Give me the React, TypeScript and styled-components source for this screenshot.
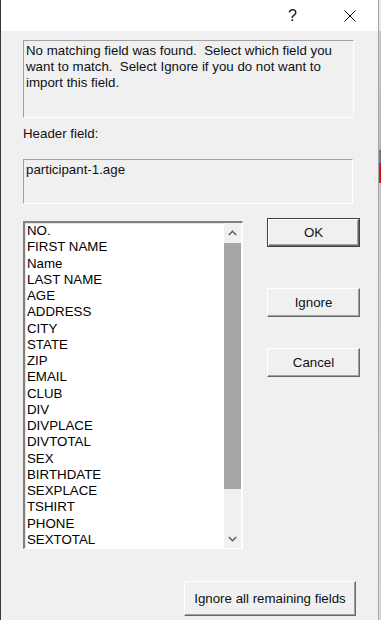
import styled, { createGlobalStyle } from "styled-components";

const GlobalStyle = createGlobalStyle`
  html, body {
    margin: 0;
    padding: 0;
    background: #f0f0f0;
  }
  body {
    font-family: "Liberation Sans", Arial, sans-serif;
    color: #000;
  }
`;

const fields = [
  "NO.",
  "FIRST NAME",
  "Name",
  "LAST NAME",
  "AGE",
  "ADDRESS",
  "CITY",
  "STATE",
  "ZIP",
  "EMAIL",
  "CLUB",
  "DIV",
  "DIVPLACE",
  "DIVTOTAL",
  "SEX",
  "BIRTHDATE",
  "SEXPLACE",
  "TSHIRT",
  "PHONE",
  "SEXTOTAL",
];

export default function App() {
  return (
    <>
      <GlobalStyle />
      <Screen>
        <Dialog>
          <TitleBar>
            <TitleButton>
              <HelpGlyph>?</HelpGlyph>
            </TitleButton>
            <TitleButton>
              <svg width="12" height="12" viewBox="0 0 12 12">
                <path d="M0.5 0.5 L11.5 11.5 M11.5 0.5 L0.5 11.5" stroke="#000" strokeWidth="1" fill="none" />
              </svg>
            </TitleButton>
          </TitleBar>

          <Body>
            <MessageBox>
              No matching field was found.&nbsp; Select which field you want to match.&nbsp; Select Ignore if you do
              not want to import this field.
            </MessageBox>

            <Label>Header field:</Label>
            <HeaderBox>participant-1.age</HeaderBox>

            <PickRow>
              <ListBox>
                <ListItems>
                  {fields.map((f) => (
                    <ListItem key={f}>{f}</ListItem>
                  ))}
                </ListItems>
                <ScrollBar>
                  <ArrowBtn>
                    <svg width="9" height="6" viewBox="0 0 9 6">
                      <path d="M0.8 5 L4.5 1.3 L8.2 5" stroke="#606060" strokeWidth="1.6" fill="none" />
                    </svg>
                  </ArrowBtn>
                  <Track>
                    <Thumb />
                  </Track>
                  <ArrowBtn>
                    <svg width="9" height="6" viewBox="0 0 9 6">
                      <path d="M0.8 1 L4.5 4.7 L8.2 1" stroke="#606060" strokeWidth="1.6" fill="none" />
                    </svg>
                  </ArrowBtn>
                </ScrollBar>
              </ListBox>

              <ButtonCol>
                <DefaultFrame>
                  <Button $w={91} $h={27}>OK</Button>
                </DefaultFrame>
                <Button $w={93} $h={29} $top={41}>
                  Ignore
                </Button>
                <Button $w={93} $h={29} $top={31}>
                  Cancel
                </Button>
              </ButtonCol>
            </PickRow>

            <Footer>
              <Button $w={172} $h={35}>Ignore all remaining fields</Button>
            </Footer>
          </Body>
        </Dialog>
        <Outside />
      </Screen>
    </>
  );
}

const Screen = styled.div`
  display: flex;
  width: 381px;
  height: 620px;
  overflow: hidden;
`;

const Dialog = styled.div`
  width: 379px;
  height: 620px;
  box-sizing: border-box;
  border-left: 1px solid #3a3a3a;
  border-right: 1px solid #a8a8a8;
  background: #f0f0f0;
  display: flex;
  flex-direction: column;
`;

const Outside = styled.div`
  width: 2px;
  height: 620px;
  background: linear-gradient(
    to bottom,
    #e8e8e8 0px,
    #e8e8e8 31px,
    #c8c8c8 31px,
    #b8b8b8 150px,
    #707070 150px,
    #808080 163px,
    #d01818 163px,
    #d01818 183px,
    #c8c8c8 183px,
    #d8d8d8 620px
  );
`;

const TitleBar = styled.div`
  height: 31px;
  background: #fff;
  display: flex;
  justify-content: flex-end;
`;

const TitleButton = styled.div`
  width: 57px;
  height: 31px;
  display: flex;
  align-items: center;
  justify-content: center;
`;

const HelpGlyph = styled.span`
  font-size: 16px;
  line-height: 16px;
  color: #111;
`;

const Body = styled.div`
  flex: 1;
  padding: 9px 0 0 22px;
  display: flex;
  flex-direction: column;
  font-size: 13.3px;
  line-height: 16px;
`;

const Sunken = styled.div`
  box-sizing: border-box;
  border-top: 1px solid #a0a0a0;
  border-left: 1px solid #a0a0a0;
  border-bottom: 1px solid #ffffff;
  border-right: 1px solid #ffffff;
  color: #111;
`;

const MessageBox = styled(Sunken)`
  width: 331px;
  height: 78px;
  padding: 2px 10px 0 2px;
`;

const Label = styled.div`
  margin-top: 8px;
  height: 16px;
  color: #111;
`;

const HeaderBox = styled(Sunken)`
  margin-top: 17px;
  width: 330px;
  height: 45px;
  padding: 2px 2px 0 2px;
`;

const PickRow = styled.div`
  display: flex;
  align-items: flex-start;
  margin-top: 14px;
`;

const ListBox = styled.div`
  box-sizing: border-box;
  width: 220px;
  height: 328px;
  margin-top: 3px;
  background: #fff;
  border-top: 2px solid #808080;
  border-left: 2px solid #808080;
  border-right: 1px solid #ffffff;
  border-bottom: 1px solid #ffffff;
  box-shadow: 1px 1px 0 #e3e3e3 inset;
  display: flex;
`;

const ListItems = styled.div`
  flex: 1;
  padding: 0 0 0 2px;
  overflow: hidden;
`;

const ListItem = styled.div`
  height: 16.25px;
  line-height: 16.25px;
  font-size: 13.3px;
  color: #000;
  white-space: nowrap;
`;

const ScrollBar = styled.div`
  width: 17px;
  background: #f0f0f0;
  display: flex;
  flex-direction: column;
  margin-right: 1px;
`;

const ArrowBtn = styled.div`
  height: 19px;
  display: flex;
  align-items: center;
  justify-content: center;
`;

const Track = styled.div`
  flex: 1;
  padding-top: 1px;
`;

const Thumb = styled.div`
  height: 246px;
  background: #a6a6a6;
`;

const ButtonCol = styled.div`
  display: flex;
  flex-direction: column;
  margin-left: 24px;
`;

const DefaultFrame = styled.div`
  border: 1px solid #404040;
  width: 93px;
  height: 29px;
  box-sizing: border-box;
  display: flex;
`;

const Button = styled.div<{ $w: number; $h: number; $top?: number }>`
  box-sizing: border-box;
  width: ${(p) => p.$w}px;
  height: ${(p) => p.$h}px;
  margin-top: ${(p) => p.$top ?? 0}px;
  background: #f0f0f0;
  border-top: 1px solid #ffffff;
  border-left: 1px solid #ffffff;
  border-right: 1px solid #696969;
  border-bottom: 1px solid #696969;
  box-shadow: -1px -1px 0 #a0a0a0 inset;
  display: flex;
  align-items: center;
  justify-content: center;
  font-size: 13.3px;
  color: #111;
  white-space: nowrap;
`;

const Footer = styled.div`
  display: flex;
  justify-content: flex-end;
  padding-right: 22px;
  margin-top: 32px;
`;
